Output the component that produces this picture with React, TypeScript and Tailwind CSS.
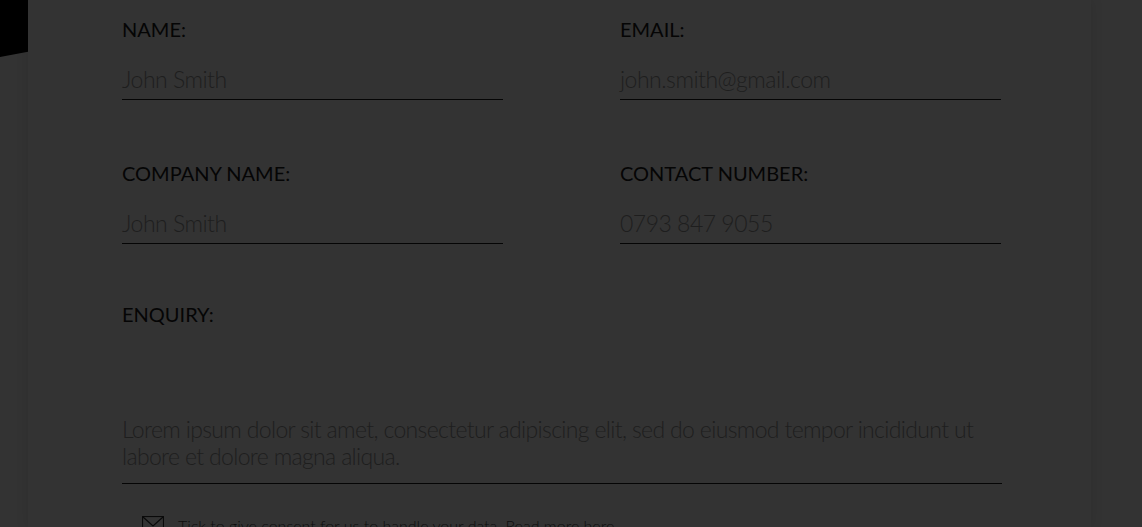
import React from "react";

function Field({ label, value }: { label: string; value: string }) {
  return (
    <div className="flex flex-col">
      <div className="text-[20px] leading-[24px] text-[#050505]">{label}</div>
      <div className="mt-[9px] pt-[15px] pb-[6px] border-b border-[#050505] text-[23px] leading-[28px] font-light text-[#1e1e1e] tracking-[-0.5px] whitespace-nowrap">
        {value}
      </div>
    </div>
  );
}

export default function App() {
  return (
    <div
      className="w-[1142px] h-[527px] overflow-hidden bg-[#333333] flex"
      style={{ fontFamily: "Lato, 'Open Sans', sans-serif" }}
    >
      <div className="w-[28px] shrink-0 relative">
        <div
          className="absolute left-0 top-0 w-[28px] h-[57px] bg-black"
          style={{ clipPath: "polygon(0 0, 100% 0, 100% 91%, 0 100%)" }}
        />
      </div>
      <div className="w-[1063px] shrink-0 bg-[#333333] shadow-[0_0_12px_rgba(0,0,0,0.12)] pl-[94px] pt-[17px]">
        <div className="grid grid-cols-[381px_381px] gap-x-[117px] gap-y-[61px]">
          <Field label="NAME:" value="John Smith" />
          <Field label="EMAIL:" value="john.smith@gmail.com" />
          <Field label="COMPANY NAME:" value="John Smith" />
          <Field label="CONTACT NUMBER:" value="0793 847 9055" />
        </div>
        <div className="mt-[58px] w-[880px]">
          <div className="text-[20px] leading-[24px] text-[#050505]">ENQUIRY:</div>
          <div className="mt-[9px] pt-[81px] pb-[13px] border-b border-[#050505] text-[23px] leading-[27px] font-light text-[#1e1e1e] tracking-[-0.65px]">
            Lorem ipsum dolor sit amet, consectetur adipiscing elit, sed do eiusmod tempor incididunt ut labore et dolore magna aliqua.
          </div>
        </div>
        <div className="mt-[32px] pl-[20px] flex items-start gap-[14px]">
          <svg width="22" height="18" viewBox="0 0 22 18" className="shrink-0">
            <rect x="0.5" y="0.5" width="21" height="17" fill="none" stroke="#0a0a0a" strokeWidth="1.2" />
            <path d="M1 1 L11 10 L21 1" fill="none" stroke="#0a0a0a" strokeWidth="1.2" />
          </svg>
          <div className="text-[16px] leading-[20px] font-light text-[#0e0e0e] whitespace-nowrap">
            Tick to give consent for us to handle your data. Read more here.
          </div>
        </div>
      </div>
      <div className="flex-1" />
    </div>
  );
}
